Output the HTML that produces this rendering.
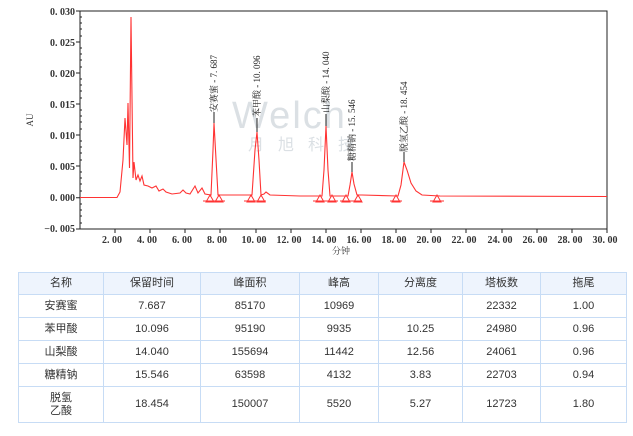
<!DOCTYPE html>
<html><head><meta charset="utf-8"><style>
html,body{margin:0;padding:0;background:#fff;width:633px;height:436px;overflow:hidden}
svg{position:absolute;left:0;top:0}
table{position:absolute;left:18px;top:272px;border-collapse:collapse;font-family:"Liberation Sans","Noto Sans CJK SC",sans-serif;font-size:11px;color:#333}
td{border:1px solid #c7dcf5;text-align:center;padding:0;height:22px;line-height:13px}
tr.h td{background:#eef4fd;height:21px}
</style></head><body>
<svg width="633" height="265" viewBox="0 0 633 265" font-family="Liberation Serif,Noto Serif CJK SC,serif">
<rect x="80" y="11" width="527" height="218" fill="none" stroke="#222" stroke-width="1"/>
<g font-size="10" fill="#333" text-anchor="end" font-weight="bold">
<text x="75" y="15">0. 030</text><text x="75" y="46">0. 025</text><text x="75" y="77">0. 020</text><text x="75" y="108">0. 015</text><text x="75" y="139">0. 010</text><text x="75" y="170">0. 005</text><text x="75" y="201">0. 000</text><text x="75" y="232">−0. 005</text>
</g>
<g stroke="#222" stroke-width="1">
<path d="M76 11h4M76 42h4M76 73h4M76 104h4M76 135h4M76 166h4M76 197.7h4M76 229h4"/>
<path d="M80 17h2M80 23h2M80 29h2M80 36h2M80 48h2M80 54h2M80 60h2M80 67h2M80 79h2M80 85h2M80 91h2M80 98h2M80 110h2M80 116h2M80 122h2M80 129h2M80 141h2M80 147h2M80 153h2M80 160h2M80 172h2M80 178h2M80 184h2M80 191h2M80 204h2M80 210h2M80 216h2M80 223h2"/>
<path d="M115 229v4M150 229v4M185 229v4M220 229v4M256 229v4M291 229v4M326 229v4M361 229v4M396 229v4M431 229v4M466 229v4M502 229v4M537 229v4M572 229v4M607 229v4"/>
</g>
<g font-size="10" fill="#333" text-anchor="middle" font-weight="bold">
<text x="112" y="243">2. 00</text><text x="147" y="243">4. 00</text><text x="182" y="243">6. 00</text><text x="217" y="243">8. 00</text><text x="254" y="243">10. 00</text><text x="289" y="243">12. 00</text><text x="324" y="243">14. 00</text><text x="359" y="243">16. 00</text><text x="394" y="243">18. 00</text><text x="429" y="243">20. 00</text><text x="464" y="243">22. 00</text><text x="500" y="243">24. 00</text><text x="535" y="243">26. 00</text><text x="570" y="243">28. 00</text><text x="605" y="243">30. 00</text>
<text x="341" y="254" font-size="9" font-weight="normal">分钟</text>
</g>
<text transform="translate(33,120) rotate(-90)" font-size="9" fill="#333" text-anchor="middle">AU</text>
<g font-family="Liberation Sans,sans-serif" fill="#cfd6dc" opacity="0.75">
<text x="232" y="128" font-size="38" letter-spacing="2">Welch</text>
<text x="248" y="150" font-size="16" letter-spacing="14" font-family="Noto Sans CJK SC,sans-serif">月旭科技</text>
</g>
<path d="M80 197.5 H117 L120 192 L123 160 L125 118 L127 145 L128 103 L129.5 168 L131 17 L133 178 L134 162 L136 180 L138 175 L140 181 L142 176 L144 185 L148 186 L152 188 L156 186 L159 191 L163 189 L166 192 L172 194 L180 193 L183 190 L186 193 L190 194 L195 186 L198 193 L202 188 L205 194 L211 195 L213 150 L214 123 L215.5 150 L218 195 L252 195 L255 150 L257 132 L259 160 L261 195 L264 194 L266 192 L270 195 L300 196 L322 196 L324 170 L326 126 L328 170 L330 196 L348 196 L350 185 L352 172 L354 184 L357 195 L362 195 L398 196 L401 185 L404 162 L407 170 L411 183 L416 191 L422 195 L440 196 L607 196.5" fill="none" stroke="#f33" stroke-width="1.1"/>
<g stroke="#222" stroke-width="1"><path d="M214 123V112M257 132V118M326 126V114M352 172V162M404 162V152"/></g>
<g fill="none" stroke="#f33" stroke-width="1">
<path d="M206 202l4-7 4 7zM215 202l4-7 4 7zM247 202l4-7 4 7zM257 202l4-7 4 7zM316 202l4-7 4 7zM328 202l4-7 4 7zM342 202l4-7 4 7zM354 202l4-7 4 7zM392 202l4-7 4 7zM433 202l4-7 4 7z"/>
<path d="M203 201h22M244 201h22M313 201h25M340 201h22M390 201h12M430 201h14"/>
</g>
<g font-size="9" fill="#222">
<text transform="translate(217,112) rotate(-90)">安赛蜜 - 7. 687</text>
<text transform="translate(260,117) rotate(-90)">苯甲酸 - 10. 096</text>
<text transform="translate(329,113) rotate(-90)">山梨酸 - 14. 040</text>
<text transform="translate(355,161) rotate(-90)">糖精钠 - 15. 546</text>
<text transform="translate(407,152) rotate(-90)">脱氢乙酸 - 18. 454</text>
</g>
</svg>
<table>
<colgroup><col style="width:85px"><col style="width:97px"><col style="width:99px"><col style="width:79px"><col style="width:84px"><col style="width:78px"><col style="width:86px"></colgroup>
<tr class="h"><td>名称</td><td>保留时间</td><td>峰面积</td><td>峰高</td><td>分离度</td><td>塔板数</td><td>拖尾</td></tr>
<tr><td>安赛蜜</td><td>7.687</td><td>85170</td><td>10969</td><td></td><td>22332</td><td>1.00</td></tr>
<tr><td>苯甲酸</td><td>10.096</td><td>95190</td><td>9935</td><td>10.25</td><td>24980</td><td>0.96</td></tr>
<tr><td>山梨酸</td><td>14.040</td><td>155694</td><td>11442</td><td>12.56</td><td>24061</td><td>0.96</td></tr>
<tr><td>糖精钠</td><td>15.546</td><td>63598</td><td>4132</td><td>3.83</td><td>22703</td><td>0.94</td></tr>
<tr><td style="height:35px">脱氢<br>乙酸</td><td>18.454</td><td>150007</td><td>5520</td><td>5.27</td><td>12723</td><td>1.80</td></tr>
</table>
</body></html>
